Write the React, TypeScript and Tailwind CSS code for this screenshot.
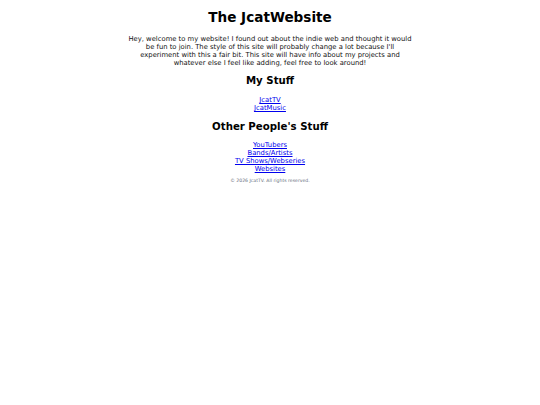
const linkClass = "text-[#0000ee] underline";

export default function App() {
  return (
    <div
      className="min-h-[405px] bg-white text-black text-center"
      style={{ fontFamily: '"DejaVu Sans", sans-serif' }}
    >
      <div className="mx-auto max-w-[285px] pt-[9px]">
        <h1 className="text-[13.6px] font-bold leading-[16px]">The JcatWebsite</h1>
        <p className="mt-[10px] text-[6.8px] leading-[8px] text-[#111]">
          Hey, welcome to my website! I found out about the indie web and thought it would be
          fun to join. The style of this site will probably change a lot because I&apos;ll
          experiment with this a fair bit. This site will have info about my projects and
          whatever else I feel like adding, feel free to look around!
        </p>

        <h2 className="mt-[8px] text-[10.2px] font-bold leading-[12px]">My Stuff</h2>
        <ul className="mt-[9px] text-[6.8px] leading-[8px]">
          <li>
            <a href="#" className={linkClass}>JcatTV</a>
          </li>
          <li>
            <a href="#" className={linkClass}>JcatMusic</a>
          </li>
        </ul>

        <h2 className="mt-[9px] text-[10.2px] font-bold leading-[12px]">Other People&apos;s Stuff</h2>
        <ul className="mt-[8px] text-[6.8px] leading-[8px]">
          <li>
            <a href="#" className={linkClass}>YouTubers</a>
          </li>
          <li>
            <a href="#" className={linkClass}>Bands/Artists</a>
          </li>
          <li>
            <a href="#" className={linkClass}>TV Shows/Webseries</a>
          </li>
          <li>
            <a href="#" className={linkClass}>Websites</a>
          </li>
        </ul>

        <footer className="mt-[5px] text-[4.6px] leading-[6px] text-gray-500">
          © 2026 JcatTV. All rights reserved.
        </footer>
      </div>
    </div>
  );
}
